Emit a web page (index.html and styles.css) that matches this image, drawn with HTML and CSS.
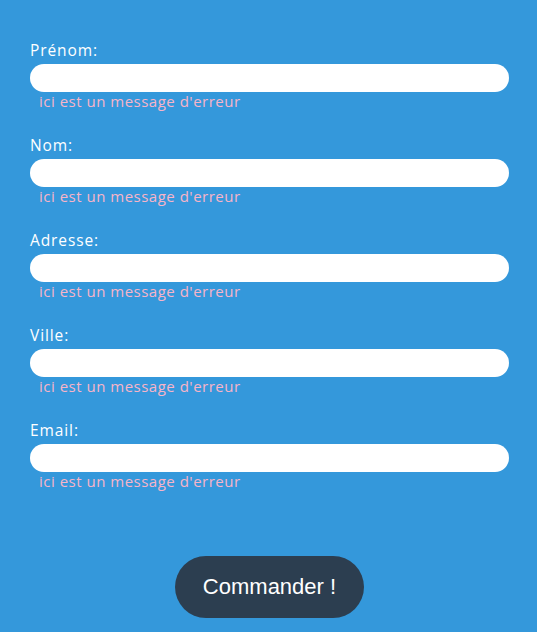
FILE: index.html
```html
<!DOCTYPE html>
<html lang="fr">
<head>
<meta charset="utf-8">
<title>Commande</title>
<link rel="stylesheet" href="styles.css">
</head>
<body>
<form class="order-form">
  <div class="field">
    <label class="field-label" for="prenom">Prénom:</label>
    <input class="field-input" id="prenom" type="text">
    <p class="field-error">ici est un message d'erreur</p>
  </div>
  <div class="field">
    <label class="field-label" for="nom">Nom:</label>
    <input class="field-input" id="nom" type="text">
    <p class="field-error">ici est un message d'erreur</p>
  </div>
  <div class="field">
    <label class="field-label" for="adresse">Adresse:</label>
    <input class="field-input" id="adresse" type="text">
    <p class="field-error">ici est un message d'erreur</p>
  </div>
  <div class="field">
    <label class="field-label" for="ville">Ville:</label>
    <input class="field-input" id="ville" type="text">
    <p class="field-error">ici est un message d'erreur</p>
  </div>
  <div class="field">
    <label class="field-label" for="email">Email:</label>
    <input class="field-input" id="email" type="email">
    <p class="field-error">ici est un message d'erreur</p>
  </div>
  <div class="actions">
    <button class="submit-btn" type="submit">Commander !</button>
  </div>
</form>
</body>
</html>
```
FILE: styles.css
```css
html, body {
  margin: 0;
  padding: 0;
  background: #3498db;
  height: 100%;
}
body {
  font-family: "Open Sans", "DejaVu Sans", sans-serif;
}
.order-form {
  padding: 40px 28px 0 30px;
  display: flex;
  flex-direction: column;
}
.field {
  display: flex;
  flex-direction: column;
  margin-bottom: 24px;
}
.field-label {
  color: #ffffff;
  font-size: 15.5px;
  line-height: 20px;
  margin-bottom: 4px;
  letter-spacing: 0.9px;
}
.field-input {
  height: 28px;
  border: none;
  border-radius: 14px;
  background: #ffffff;
  padding: 0 12px;
  box-sizing: border-box;
  width: 100%;
  outline: none;
}
.field-error {
  margin: 0;
  padding-left: 9px;
  color: #f8b4c8;
  font-size: 15px;
  line-height: 19px;
  letter-spacing: 0.5px;
}
.actions {
  display: flex;
  justify-content: center;
  padding-top: 41px;
}
.submit-btn {
  width: 189px;
  height: 62px;
  border: none;
  border-radius: 31px;
  background: #2c3e50;
  color: #ffffff;
  font-family: "Liberation Sans", Arial, sans-serif;
  font-size: 22px;
  cursor: pointer;
}
```
